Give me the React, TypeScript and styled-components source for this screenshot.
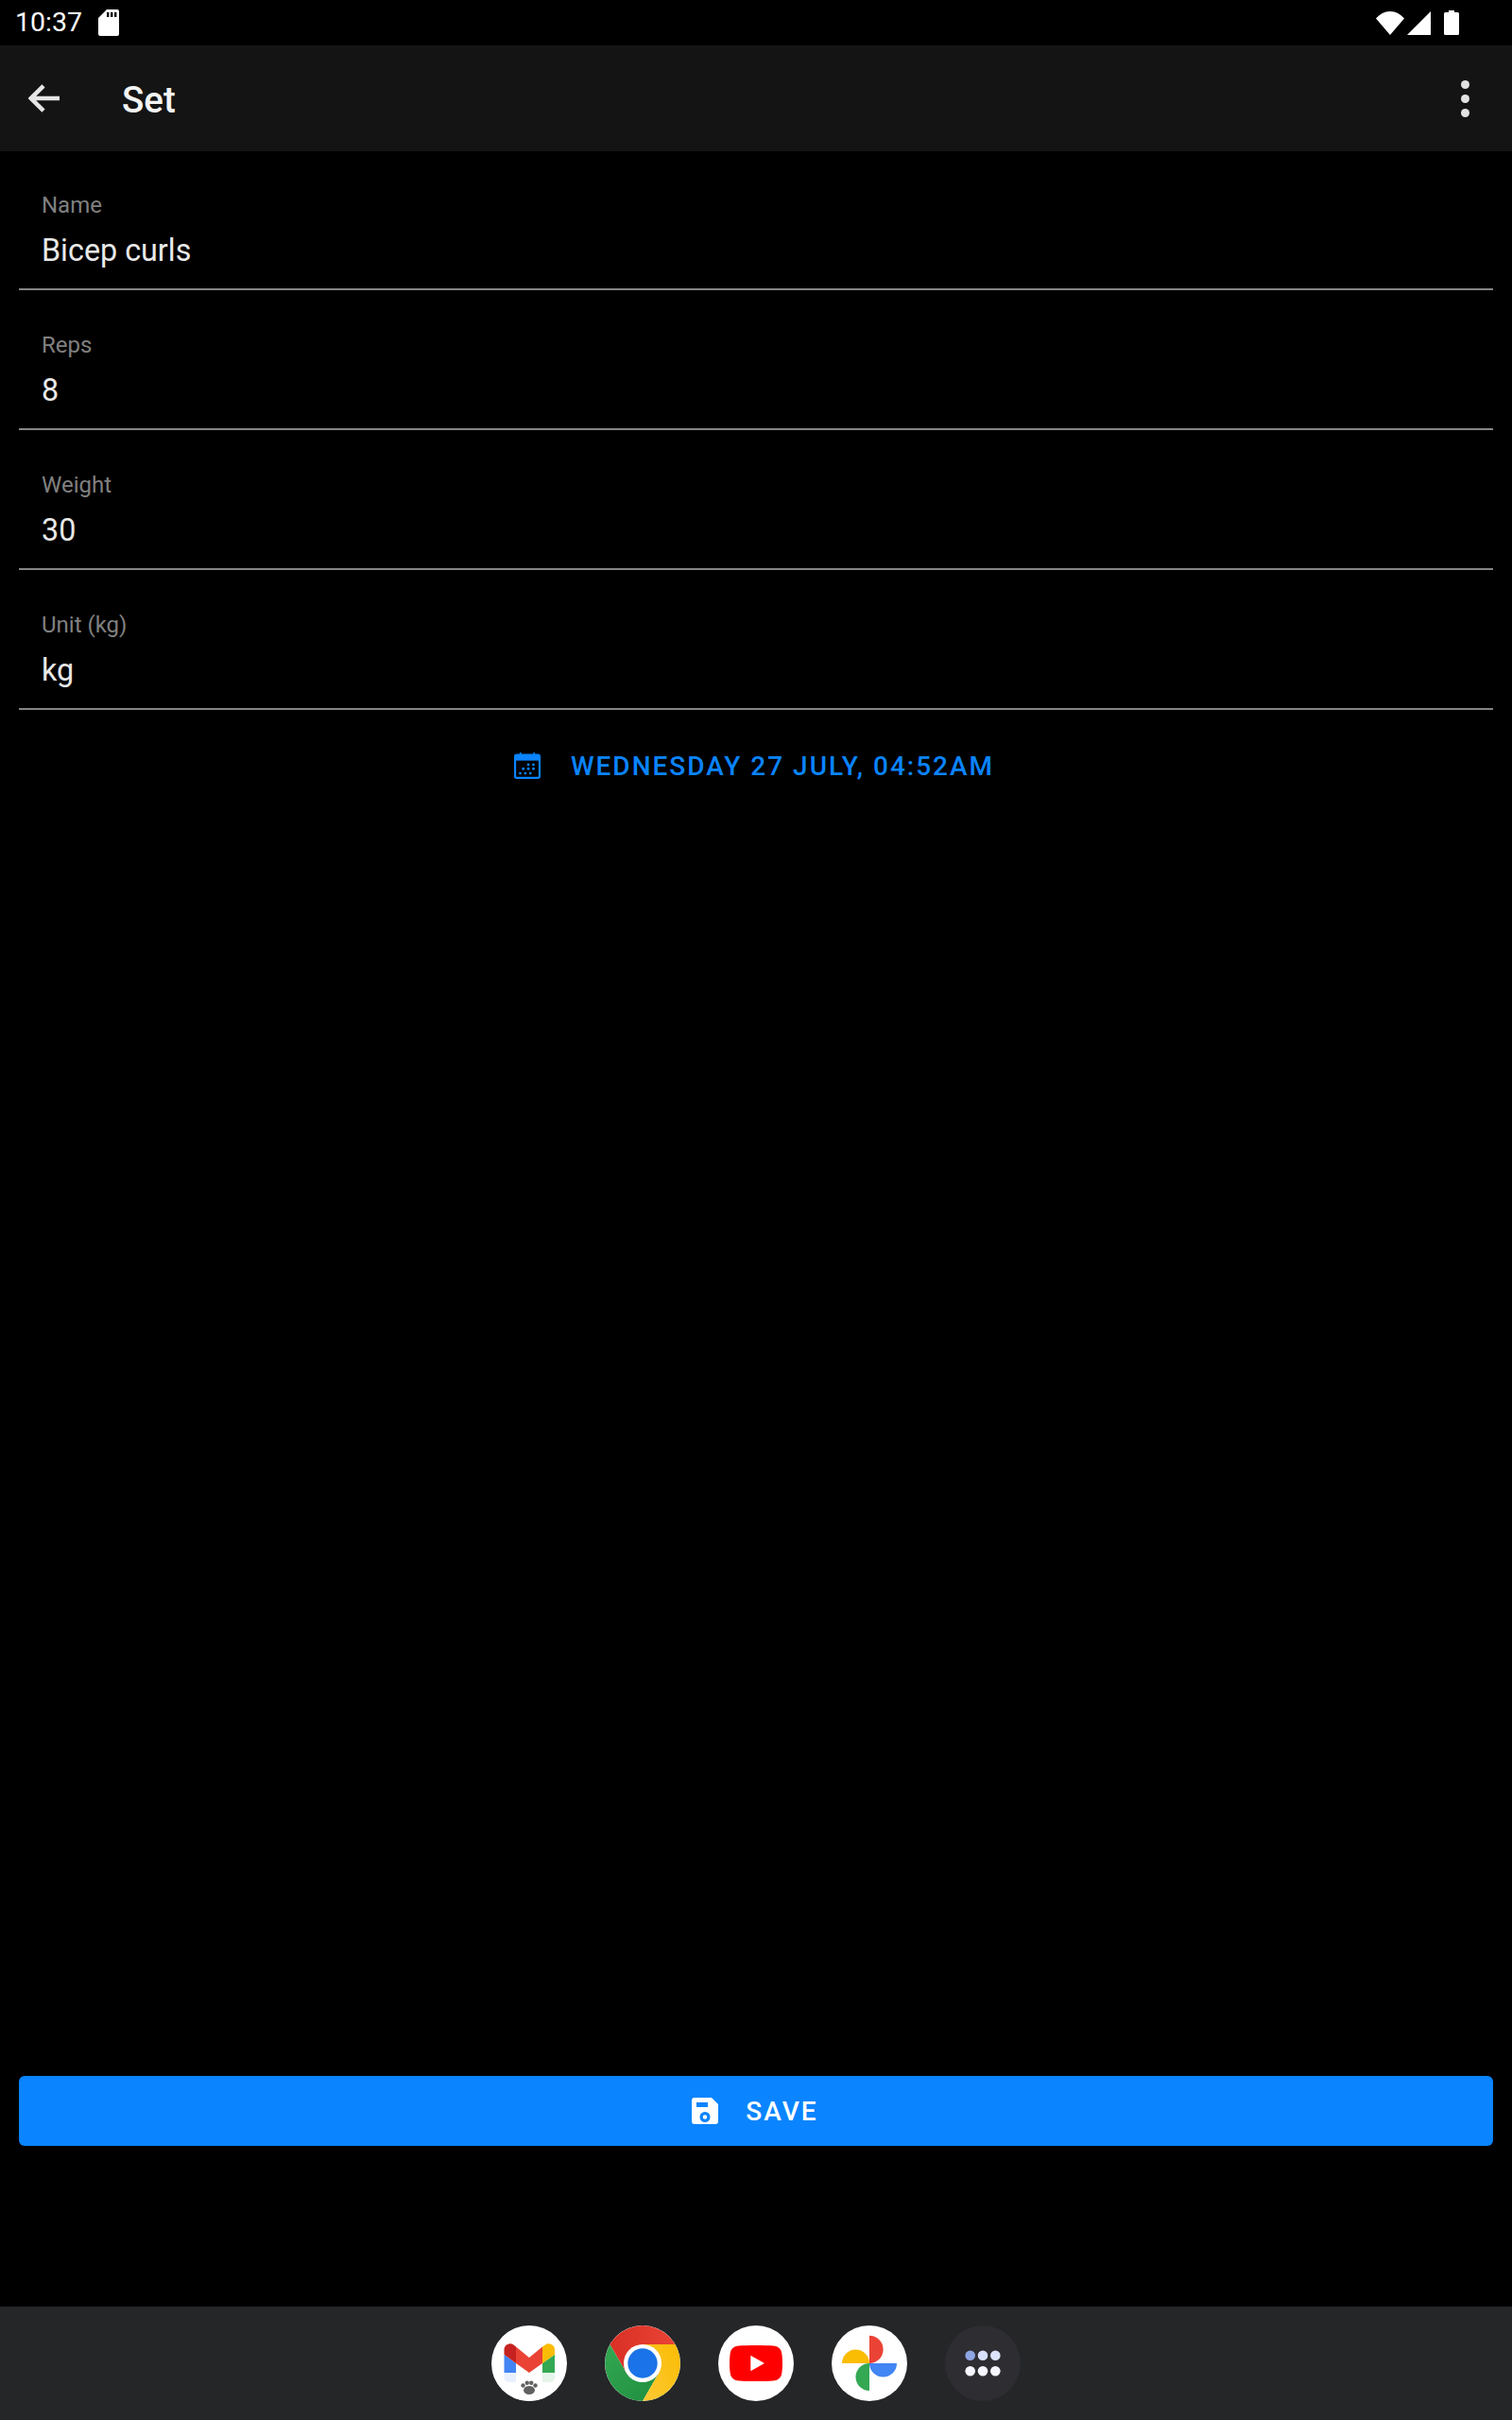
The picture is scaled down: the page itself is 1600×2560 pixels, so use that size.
import styled, { createGlobalStyle } from "styled-components";

const GlobalStyle = createGlobalStyle`
  html, body {
    margin: 0;
    padding: 0;
    background: #000;
  }
`;

const Screen = styled.div`
  width: 1600px;
  height: 2560px;
  display: flex;
  flex-direction: column;
  background: #000;
  font-family: Roboto, "Liberation Sans", sans-serif;
  overflow: hidden;
`;

const StatusBar = styled.div`
  height: 48px;
  flex: none;
  display: flex;
  align-items: center;
  padding: 0 56px 0 16px;
  color: #fff;
`;
const Clock = styled.span`
  font-size: 28.5px;
  line-height: 48px;
  width: 88px;
`;
const StatusRight = styled.div`
  margin-left: auto;
  display: flex;
  align-items: center;
  gap: 3px;
`;

const Header = styled.header`
  height: 112px;
  flex: none;
  display: flex;
  align-items: center;
  background: #141414;
  padding: 0 45px 0 30px;
`;
const Title = styled.h1`
  margin: 2px 0 0 66px;
  font-size: 38.5px;
  font-weight: 500;
  color: #f4f4f4;
`;
const Menu = styled.div`
  margin-left: auto;
  display: flex;
  flex-direction: column;
  gap: 6px;
`;
const Dot = styled.span`
  width: 9px;
  height: 9px;
  border-radius: 50%;
  background: #e3e3e3;
`;

const Form = styled.form`
  flex: 1;
  display: flex;
  flex-direction: column;
  padding: 0 20px;
`;
const Field = styled.div`
  height: 148px;
  box-sizing: border-box;
  padding: 42px 24px 0;
  position: relative;
  &::after {
    content: "";
    position: absolute;
    left: 0;
    right: 0;
    top: 145px;
    height: 2px;
    background: #858585;
  }
`;
const Label = styled.div`
  font-size: 24px;
  line-height: 30px;
  color: #808080;
`;
const Value = styled.div`
  margin-top: 10px;
  font-size: 32.3px;
  line-height: 46px;
  color: #e8e8e8;
`;
const DateButton = styled.div`
  height: 36px;
  margin-top: 40px;
  padding-right: 4px;
  display: flex;
  align-items: center;
  justify-content: center;
  gap: 32px;
  font-size: 28px;
  font-weight: 500;
  letter-spacing: 2px;
  color: #0a84ff;
`;
const SaveButton = styled.div`
  margin-top: auto;
  margin-bottom: 170px;
  height: 74px;
  padding-right: 2px;
  display: flex;
  align-items: center;
  justify-content: center;
  gap: 29px;
  border-radius: 6px;
  background: #0a84ff;
  color: #fff;
  font-size: 28px;
  font-weight: 500;
  letter-spacing: 2px;
`;

const Dock = styled.nav`
  height: 120px;
  flex: none;
  display: flex;
  align-items: center;
  justify-content: center;
  gap: 40px;
  background: #242628;
`;
const DockIcon = styled.div<{ $bg?: string }>`
  width: 80px;
  height: 80px;
  border-radius: 50%;
  overflow: hidden;
  background: ${(p) => p.$bg || "#fff"};
`;
const Glyph = styled.svg`
  display: block;
`;
const BatteryGlyph = styled(Glyph)`
  margin-left: 11px;
`;

function Gmail() {
  return (
    <Glyph width="80" height="80" viewBox="0 0 80 80">
      <path d="M13.500 30.700V55.200a4.800 4.800 0 0 0 4.800 4.800H26V40z" fill="#4285f4" />
      <path d="M67 30.700V55.200a4.800 4.800 0 0 1-4.800 4.800H54V40z" fill="#34a853" />
      <path d="M67 30.700V25.500a6.300 6.300 0 0 0-10-5L54 22.500V40z" fill="#fbbc04" />
      <path d="M26 22.500 40 34 54 22.500V40L40 50 26 40z" fill="#ea4335" />
      <path d="M13.500 30.700V25.500a6.300 6.300 0 0 1 10-5L26 22.500V40z" fill="#c5221f" />
      <rect x="0" y="50" width="80" height="30" fill="#fff" fillOpacity="0.88" />
      <g fill="#616161">
        <ellipse cx="40" cy="68.500" rx="6" ry="4.500" />
        <circle cx="33.500" cy="63.500" r="2.200" />
        <circle cx="37.800" cy="60.800" r="2.200" />
        <circle cx="42.200" cy="60.800" r="2.200" />
        <circle cx="46.500" cy="63.500" r="2.200" />
      </g>
    </Glyph>
  );
}

function Chrome() {
  return (
    <Glyph width="80" height="80" viewBox="0 0 80 80">
      <defs>
        <linearGradient id="cr" x1="0" y1="0" x2="1" y2="0">
          <stop offset="0" stopColor="#d93025" />
          <stop offset="1" stopColor="#ea4335" />
        </linearGradient>
        <linearGradient id="cg" x1="0" y1="0" x2="1" y2="1">
          <stop offset="0" stopColor="#34a853" />
          <stop offset="1" stopColor="#1e8e3e" />
        </linearGradient>
        <linearGradient id="cy" x1="1" y1="0" x2="0" y2="1">
          <stop offset="0" stopColor="#fbbc04" />
          <stop offset="1" stopColor="#fcc934" />
        </linearGradient>
      </defs>
      <path d="M40 20H74.600A40 40 0 0 0 5.400 20L22.700 50 40 40z" fill="url(#cr)" />
      <path d="M22.700 50 5.400 20A40 40 0 0 0 40 80L57.300 50 40 40z" fill="url(#cg)" />
      <path d="M57.300 50 40 80A40 40 0 0 0 74.600 20H40V40z" fill="url(#cy)" />
      <circle cx="40" cy="40" r="20" fill="#fff" />
      <circle cx="40" cy="40" r="15.700" fill="#1a73e8" />
    </Glyph>
  );
}

function YouTube() {
  return (
    <Glyph width="80" height="80" viewBox="0 0 80 80">
      <path
        d="M22 21.500C30 20.800 50 20.800 58 21.500 64 22 67 25 67.500 31 68.200 36 68.200 44 67.500 49 67 55 64 58 58 58.500 50 59.200 30 59.200 22 58.500 16 58 13 55 12.500 49 11.800 44 11.800 36 12.500 31 13 25 16 22 22 21.500z"
        fill="#f00"
      />
      <path d="M34.300 31.700 49 40 34.300 48.300z" fill="#fff" />
    </Glyph>
  );
}

function Photos() {
  return (
    <Glyph width="80" height="80" viewBox="0 0 80 80">
      <path d="M40 40V10.800A14.600 14.600 0 0 1 40 40z" fill="#ea4335" />
      <path d="M40 40H69A14.500 14.500 0 0 1 40 40z" fill="#4285f4" />
      <path d="M40 40V69A14.500 14.500 0 0 1 40 40z" fill="#34a853" />
      <path d="M40 40H11A14.500 14.500 0 0 1 40 40z" fill="#fbbc04" />
    </Glyph>
  );
}

function Apps() {
  return (
    <Glyph width="80" height="80" viewBox="0 0 80 80">
      <circle cx="26.700" cy="31.700" r="5.300" fill="#8ea5e4" />
      <circle cx="40" cy="31.700" r="5.300" fill="#d8e0fb" />
      <circle cx="53.300" cy="31.700" r="5.300" fill="#dde3fa" />
      <circle cx="26.700" cy="48.300" r="5.300" fill="#f5f6ff" />
      <circle cx="40" cy="48.300" r="5.300" fill="#f5f6ff" />
      <circle cx="53.300" cy="48.300" r="5.300" fill="#f5f6ff" />
    </Glyph>
  );
}

const fields = [
  { label: "Name", value: "Bicep curls" },
  { label: "Reps", value: "8" },
  { label: "Weight", value: "30" },
  { label: "Unit (kg)", value: "kg" },
];

export default function App() {
  return (
    <Screen>
      <GlobalStyle />
      <StatusBar>
        <Clock>10:37</Clock>
        <Glyph width="22" height="28" viewBox="0 0 22 28">
          <path
            fillRule="evenodd"
            d="M9 0h11a2 2 0 0 1 2 2v24a2 2 0 0 1-2 2H2a2 2 0 0 1-2-2V9zM9 3v5h2.400V3zM13 3v5h2.400V3zM17 3v5h2.400V3z"
            fill="#fff"
          />
        </Glyph>
        <StatusRight>
          <Glyph width="30" height="25" viewBox="0 0 30 25">
            <path d="M15 25 0 7.500C4 3 9 0 15 0s11 3 15 7.500z" fill="#fff" />
          </Glyph>
          <Glyph width="25" height="25" viewBox="0 0 25 25">
            <path d="M25 0v25H0z" fill="#fff" />
          </Glyph>
          <BatteryGlyph width="16" height="26" viewBox="0 0 16 26">
            <path d="M5 0h6v2h3.500A1.500 1.500 0 0 1 16 3.500V24.500A1.500 1.500 0 0 1 14.500 26H1.500A1.500 1.500 0 0 1 0 24.500V3.500A1.500 1.500 0 0 1 1.500 2H5z" fill="#fff" />
          </BatteryGlyph>
        </StatusRight>
      </StatusBar>

      <Header>
        <Glyph width="33" height="30" viewBox="0 0 33 30">
          <path d="M33 15H3M16 1.800 2.800 15 16 28.200" fill="none" stroke="#e6e6e6" strokeWidth="4.500" />
        </Glyph>
        <Title>Set</Title>
        <Menu>
          <Dot />
          <Dot />
          <Dot />
        </Menu>
      </Header>

      <Form>
        {fields.map((f) => (
          <Field key={f.label}>
            <Label>{f.label}</Label>
            <Value>{f.value}</Value>
          </Field>
        ))}
        <DateButton>
          <Glyph width="28" height="28" viewBox="0 0 26 26">
            <rect x="1" y="2.500" width="24" height="22.500" rx="1.500" fill="none" stroke="#0a84ff" strokeWidth="2" />
            <rect x="1" y="2.500" width="24" height="5.500" fill="#0a84ff" />
            <rect x="5.500" y="0" width="1.500" height="3" fill="#0a84ff" />
            <rect x="19" y="0" width="1.500" height="3" fill="#0a84ff" />
            <g fill="#0a84ff">
              <circle cx="14" cy="12" r="1.300" />
              <circle cx="19" cy="12" r="1.300" />
              <circle cx="9" cy="16" r="1.300" />
              <circle cx="14" cy="16" r="1.300" />
              <circle cx="19" cy="16" r="1.300" />
              <circle cx="6" cy="20.500" r="1.300" />
              <circle cx="11" cy="20.500" r="1.300" />
              <circle cx="16" cy="20.500" r="1.300" />
            </g>
          </Glyph>
          WEDNESDAY 27 JULY, 04:52AM
        </DateButton>
        <SaveButton>
          <Glyph width="28" height="28" viewBox="0 0 28 28">
            <path
              fillRule="evenodd"
              d="M3 0H21L28 7V25A3 3 0 0 1 25 28H3A3 3 0 0 1 0 25V3A3 3 0 0 1 3 0zM5 5V10H17V5zM14 15A5.500 5.500 0 1 0 14 26 5.500 5.500 0 0 0 14 15zM14 18.200A2.300 2.300 0 1 1 14 22.800 2.300 2.300 0 0 1 14 18.200z"
              fill="#fff"
            />
          </Glyph>
          SAVE
        </SaveButton>
      </Form>

      <Dock>
        <DockIcon>
          <Gmail />
        </DockIcon>
        <DockIcon>
          <Chrome />
        </DockIcon>
        <DockIcon>
          <YouTube />
        </DockIcon>
        <DockIcon>
          <Photos />
        </DockIcon>
        <DockIcon $bg="#2e2d32">
          <Apps />
        </DockIcon>
      </Dock>
    </Screen>
  );
}
